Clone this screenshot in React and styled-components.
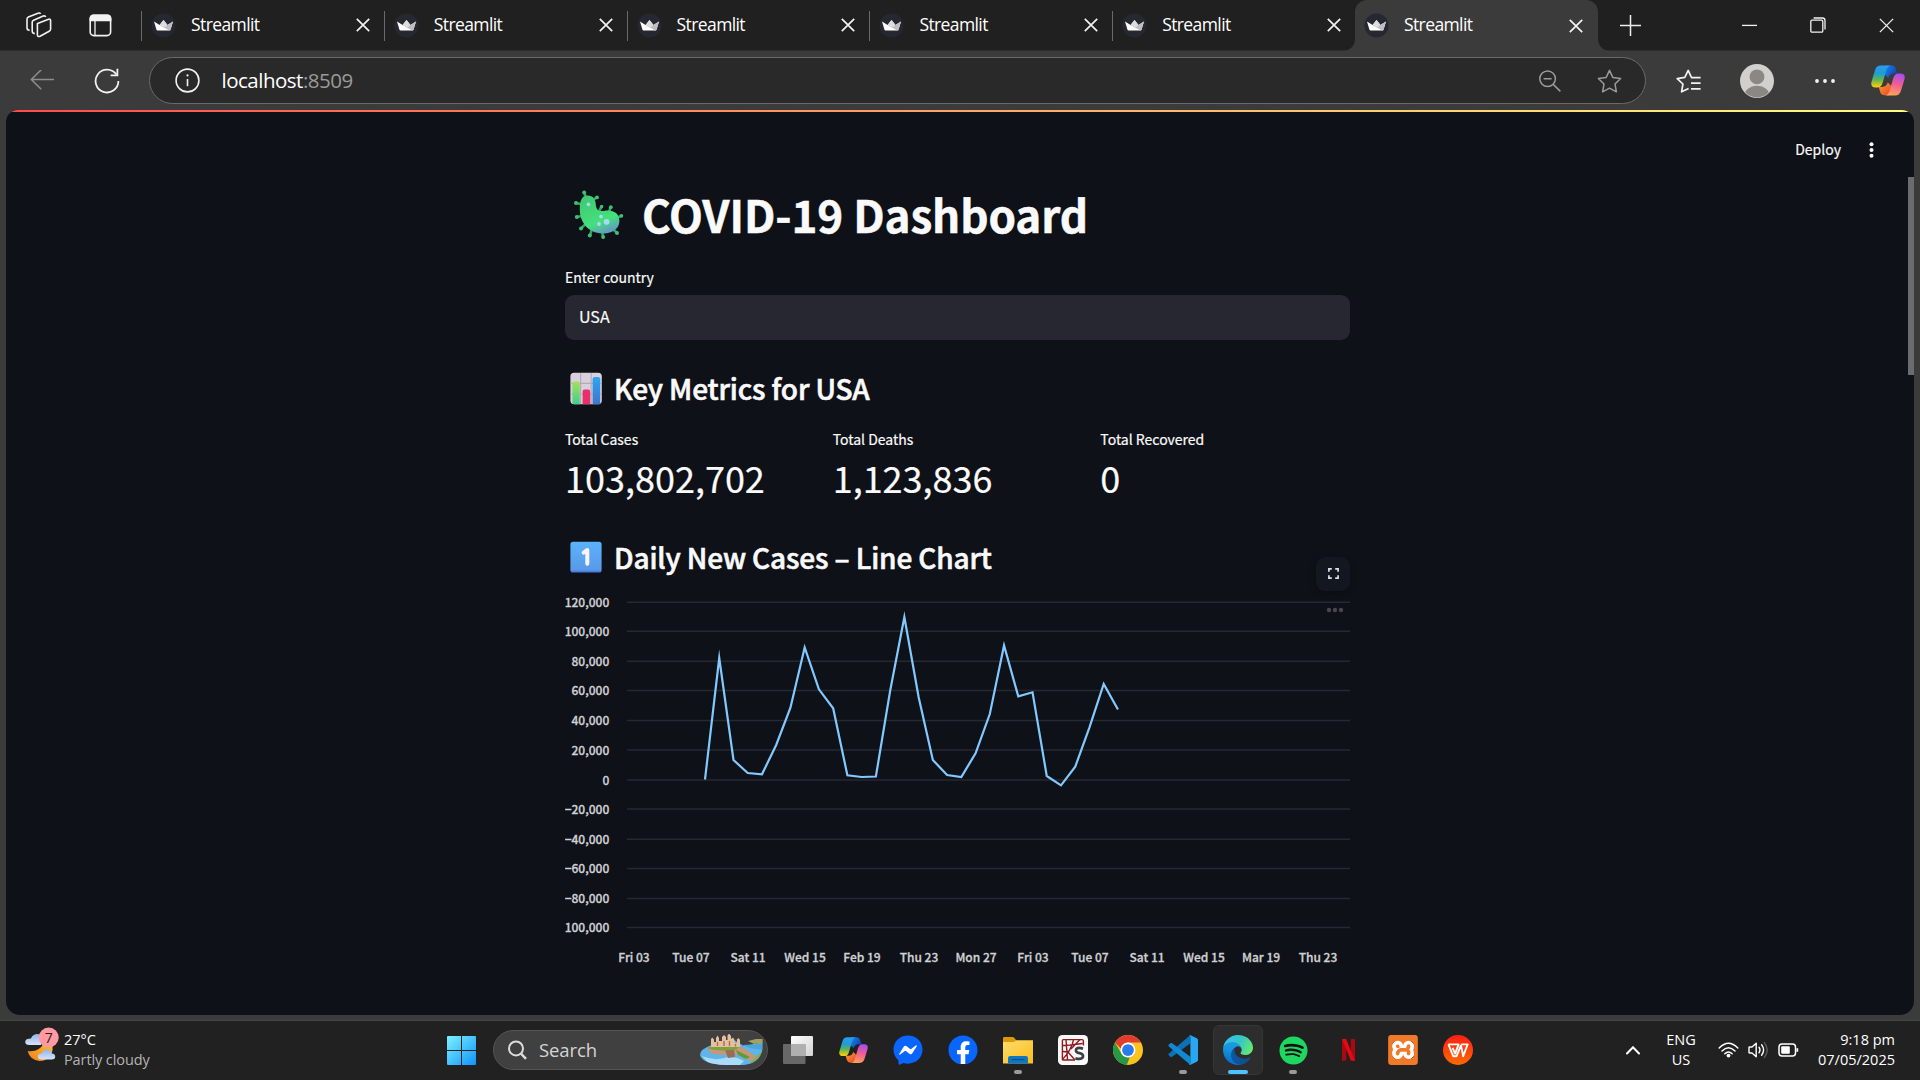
import React from "react";
import styled, { createGlobalStyle } from "styled-components";
import { FaFacebook, FaFacebookMessenger, FaSpotify } from "react-icons/fa";
import { SiXampp } from "react-icons/si";

const UI_FONT = '"Open Sans", "Noto Sans", sans-serif';
const APP_FONT = '"Noto Sans CJK SC", "Noto Sans CJK JP", sans-serif';

const GlobalStyle = createGlobalStyle`
  * { box-sizing: border-box; }
  html, body { margin: 0; padding: 0; background: #3b3b3b; overflow: hidden; }
  svg { display: block; flex: none; }
`;

const Screen = styled.div`
  width: 1920px;
  height: 1080px;
  display: flex;
  flex-direction: column;
  background: #3b3b3b;
  overflow: hidden;
  font-family: ${UI_FONT};
  color: #fff;
`;

/* ---------- tab strip ---------- */
const TabStrip = styled.div`
  height: 51px;
  flex: none;
  display: flex;
  background: #202020;
  border-bottom: 1px solid #2d2d2d;
`;
const StripTools = styled.div`
  width: 141px;
  display: flex;
  align-items: center;
  padding-left: 26px;
  gap: 37px;
`;
const Tab = styled.div`
  width: ${(p) => (p.$active ? 243.5 : 242.8)}px;
  height: ${(p) => (p.$active ? 51 : 50)}px;
  position: relative;
  display: flex;
  align-items: center;
  padding: 0 ${(p) => (p.$active ? 15 : 14)}px 0 ${(p) => (p.$active ? 9 : 10)}px;
  background: ${(p) => (p.$active ? "#3b3b3b" : "transparent")};
  border-radius: ${(p) => (p.$active ? "12px 12px 0 0" : "0")};
  &::before {
    content: "";
    display: ${(p) => (p.$active ? "none" : "block")};
    position: absolute;
    left: 0;
    top: 11px;
    width: 1px;
    height: 30px;
    background: #6a6a6a;
  }
`;
const TabTitle = styled.span`
  margin-left: 15px;
  flex: 1;
  font-size: 17.5px;
  letter-spacing: -0.6px;
  line-height: 24px;
  padding-bottom: 3px;
`;
const Flare = styled.div`
  position: absolute;
  bottom: 0;
  width: 12px;
  height: 12px;
  ${(p) => (p.$side === "left" ? "left: -12px;" : "right: -12px;")}
  background: radial-gradient(
    circle at ${(p) => (p.$side === "left" ? "0 0" : "100% 0")},
    transparent 11.5px,
    #3b3b3b 12.5px
  );
`;
const StripEnd = styled.div`
  flex: 1;
  display: flex;
  align-items: center;
  padding: 0 26px 0 22px;
`;
const WindowButtons = styled.div`
  margin-left: auto;
  display: flex;
  align-items: center;
  gap: 53px;
`;

/* ---------- address row ---------- */
const Toolbar = styled.div`
  height: 59px;
  flex: none;
  display: flex;
  align-items: center;
  background: #3b3b3b;
`;
const NavButtons = styled.div`
  width: 149px;
  display: flex;
  align-items: center;
  padding-left: 30px;
  gap: 40px;
`;
const AddressBar = styled.div`
  width: 1497px;
  height: 47px;
  display: flex;
  align-items: center;
  padding: 0 23px 0 25px;
  border: 1.5px solid #6a6a6a;
  border-radius: 24px;
  background: #292929;
`;
const Url = styled.span`
  margin-left: 21.5px;
  flex: 1;
  font-size: 20.5px;
  letter-spacing: -0.5px;
  line-height: 28px;
  padding-bottom: 2px;
  color: #fff;
  span { color: #9a9a9a; }
`;
const AddressActions = styled.div`
  display: flex;
  align-items: center;
  gap: 36px;
`;
const ToolbarActions = styled.div`
  flex: 1;
  display: flex;
  align-items: center;
  padding-left: 30px;
`;
const Slot = styled.div`
  margin-left: ${(p) => p.$gap}px;
`;

/* ---------- page ---------- */
const Page = styled.main`
  position: relative;
  width: 1908px;
  height: 905px;
  flex: none;
  margin-left: 6px;
  background: #0e1117;
  border-radius: 12px 12px 14px 14px;
  overflow: hidden;
  display: flex;
  flex-direction: column;
  font-family: ${APP_FONT};
  color: #fafafa;
`;
const Decoration = styled.div`
  height: 2px;
  flex: none;
  background: linear-gradient(90deg, #ff4b4b, #fffd80);
`;
const AppHeader = styled.header`
  height: 72px;
  flex: none;
  display: flex;
  align-items: center;
  justify-content: flex-end;
  padding: 3px 40px 0 0;
  gap: 28px;
`;
const Deploy = styled.span`
  font-size: 14px;
  line-height: 20px;
  padding-bottom: 1px;
  -webkit-text-stroke: 0.2px currentColor;
`;
const ScrollThumb = styled.div`
  position: absolute;
  right: 0;
  top: 67px;
  width: 6px;
  height: 198px;
  background: #6b6c70;
`;
const Column = styled.div`
  width: 785px;
  margin-left: 559px;
  display: flex;
  flex-direction: column;
`;
const Title = styled.h1`
  margin: 0;
  height: 60px;
  display: flex;
  align-items: center;
  padding-left: 8px;
  gap: 17px;
  font-size: 44px;
  line-height: 60px;
  font-weight: 700;
  letter-spacing: -0.08px;
  white-space: nowrap;
  -webkit-text-stroke: 0.5px currentColor;
`;
const FieldLabel = styled.label`
  margin-top: 23px;
  height: 20px;
  font-size: 14px;
  line-height: 20px;
  -webkit-text-stroke: 0.2px currentColor;
`;
const Input = styled.div`
  margin-top: 8px;
  height: 45px;
  display: flex;
  align-items: center;
  padding: 0 14px 4px;
  border-radius: 9px;
  background: #262730;
  font-size: 16px;
  line-height: 24px;
  -webkit-text-stroke: 0.2px currentColor;
`;
const Heading = styled.h2`
  margin: ${(p) => p.$top}px 0 0;
  height: 40px;
  display: flex;
  align-items: center;
  padding-left: 5px;
  gap: 11px;
  font-size: 28px;
  line-height: 40px;
  font-weight: 500;
  letter-spacing: -0.14px;
  white-space: nowrap;
  -webkit-text-stroke: 0.6px currentColor;
`;
const HeadingText = styled.span`
  padding-bottom: ${(p) => p.$lift || 0}px;
`;
const Metrics = styled.div`
  margin-top: 20px;
  display: grid;
  grid-template-columns: repeat(3, 1fr);
  column-gap: 18px;
`;
const MetricLabel = styled.div`
  font-size: 14px;
  line-height: 20px;
  -webkit-text-stroke: 0.2px currentColor;
`;
const MetricValue = styled.div`
  margin-top: 4px;
  font-size: 36px;
  line-height: 48px;
  -webkit-text-stroke: 0.2px currentColor;
`;
const ChartBox = styled.div`
  position: relative;
  margin-top: 15px;
  height: 380px;
`;
const FullscreenButton = styled.button`
  position: absolute;
  right: 0;
  top: -35px;
  width: 34px;
  height: 34px;
  padding: 0;
  display: grid;
  place-items: center;
  border: 0;
  border-radius: 9px;
  background: #131720;
  box-shadow: 0 2px 6px rgba(0, 0, 0, 0.25);
`;

/* ---------- taskbar ---------- */
const Taskbar = styled.footer`
  margin-top: auto;
  height: 59px;
  flex: none;
  display: flex;
  align-items: flex-start;
  background: #212121;
  box-shadow: 0 -1px 0 #464646;
`;
const Weather = styled.div`
  width: 447px;
  height: 59px;
  display: flex;
  padding: 5px 0 0 25px;
  gap: 5px;
`;
const WeatherText = styled.div`
  padding-top: 4px;
  font-size: 14.5px;
  line-height: 20px;
  div + div { color: #b4b4b4; letter-spacing: -0.1px; }
`;
const StartSlot = styled.div`
  width: 46px;
  padding-top: 15px;
`;
const Search = styled.div`
  width: 275px;
  height: 40px;
  margin-top: 9px;
  display: flex;
  align-items: center;
  padding: 0 3px 0 14px;
  border: 1px solid #545454;
  border-radius: 20px;
  background: #404040;
`;
const SearchText = styled.span`
  margin-left: 12px;
  flex: 1;
  font-size: 18.5px;
  letter-spacing: -0.1px;
  line-height: 26px;
  color: #d4d4d4;
`;
const Apps = styled.div`
  display: flex;
  margin-top: 4px;
  margin-left: 5px;
`;
const AppSlot = styled.div`
  width: 50px;
  height: 50px;
  margin-right: 5.03px;
  position: relative;
  display: grid;
  place-items: center;
  border-radius: 6px;
  background: ${(p) => (p.$active ? "#2d2d2d" : "transparent")};
  border: 1px solid ${(p) => (p.$active ? "#363636" : "transparent")};
  &::after {
    content: "";
    display: ${(p) => (p.$active || p.$running ? "block" : "none")};
    position: absolute;
    bottom: 0;
    left: 50%;
    transform: translateX(-50%);
    width: ${(p) => (p.$active ? 20 : 8)}px;
    height: 4px;
    border-radius: 2px;
    background: ${(p) => (p.$active ? "#4cc2ff" : "#9a9a9a")};
  }
`;
const Disc = styled.div`
  width: 30px;
  height: 30px;
  border-radius: ${(p) => p.$radius || "50%"};
  display: grid;
  place-items: center;
  color: ${(p) => p.$color};
  background: radial-gradient(${(p) => p.$inner} 0 ${(p) => p.$reach || 12}px, transparent ${(p) => p.$reach || 12}px);
`;
const Tray = styled.div`
  margin-left: auto;
  height: 59px;
  display: flex;
  align-items: flex-start;
  padding-right: 25px;
`;
const TrayIcon = styled.div`
  padding-top: ${(p) => p.$top}px;
  margin-right: ${(p) => p.$gap}px;
`;
const TrayText = styled.div`
  width: ${(p) => p.$width}px;
  margin-right: ${(p) => p.$gap || 0}px;
  padding-top: 9px;
  font-size: 14.5px;
  line-height: 20px;
  text-align: ${(p) => p.$align};
  white-space: nowrap;
`;

/* ---------- icons ---------- */
const Crown = () => (
  <svg width="25" height="25" viewBox="0 0 25 25">
    <circle cx="12.5" cy="12.5" r="12" fill="#262730" />
    <path d="M3 8.5 8.6 12 12.5 7 16.4 12 22 8.5 19.6 16.5Q19.3 17.4 18.4 17.4H6.6Q5.7 17.4 5.4 16.5Z" fill="#fff" />
    <path d="M12.5 7 16.4 12 22 8.5 19.6 16.5Q19.3 17.4 18.4 17.4L9 12.5Z" fill="#bdbdc2" />
    <path d="M8.6 12 12.5 7 16.4 12 13.5 14.5Z" fill="#dcdcdf" />
  </svg>
);
const Cross = ({ size, weight = 1.7 }) => (
  <svg width={size} height={size} viewBox="0 0 14 14" fill="none" stroke="#f2f2f2" strokeWidth={weight}>
    <path d="M.8.8 13.2 13.2M13.2.8.8 13.2" />
  </svg>
);
const Workspaces = () => (
  <svg width="26" height="26" viewBox="0 0 26 26" fill="none" stroke="#f2f2f2" strokeWidth="1.6" strokeLinejoin="round">
    <path d="M11.5 11.6 22.6 7.2Q24.6 6.6 24.6 8.8V17Q24.6 18.6 23.2 19.2L14 24.2Q11.4 25.2 11.4 22.8V11.6Z" />
    <path d="M8.8 21.6Q6.2 21.4 6.2 19V10.2Q6.2 8.8 7.6 8.2L17.2 4Q19.2 3.4 19.6 5" />
    <path d="M3.6 18.4Q1 18.2 1 15.8V7.2Q1 5.6 2.4 5L12 1.2Q14 .6 14.4 2" />
  </svg>
);
const TabActions = () => (
  <svg width="23" height="23" viewBox="0 0 23 23" fill="none" stroke="#f2f2f2" strokeWidth="1.6">
    <rect x="1.2" y="1.2" width="20.4" height="20.4" rx="3.6" />
    <path d="M1.4 6.4V4.6Q1.4 1.4 4.6 1.4H18.4Q21.6 1.4 21.6 4.6V6.4Z" fill="#f2f2f2" />
    <path d="M6 6.5V21.6" strokeWidth="1.3" />
  </svg>
);
const Plus = () => (
  <svg width="21" height="21" viewBox="0 0 21 21" stroke="#ededed" strokeWidth="1.5">
    <path d="M10.5 0V21M0 10.5H21" />
  </svg>
);
const Minimize = () => (
  <svg width="15" height="16" viewBox="0 0 15 16" stroke="#f2f2f2" strokeWidth="1.3">
    <path d="M0 8.4H15" />
  </svg>
);
const Restore = () => (
  <svg width="16" height="16" viewBox="0 0 16 16" fill="none" stroke="#f2f2f2" strokeWidth="1.3">
    <rect x=".8" y="3.2" width="12" height="12" rx="1.2" />
    <path d="M3.6 1H12.4Q15 1 15 3.6V12.6" />
  </svg>
);
const BackArrow = () => (
  <svg width="24" height="21" viewBox="0 0 24 21" fill="none" stroke="#8c8c8c" strokeWidth="1.6">
    <path d="M24 9.5H1.4M11.2-.2 1.4 9.500 11.2 19.2" />
  </svg>
);
const Refresh = () => (
  <svg width="26" height="26" viewBox="0 0 26 26" fill="none" stroke="#f2f2f2" strokeWidth="1.8">
    <path d="M22.4 6.6A11.4 11.4 0 1 0 24.4 13" />
    <path d="M23.4.8V7.4H16.6" />
  </svg>
);
const Info = () => (
  <svg width="25" height="25" viewBox="0 0 25 25" fill="none" stroke="#f2f2f2" strokeWidth="1.6">
    <circle cx="12.5" cy="12.5" r="11.4" />
    <path d="M12.5 11V18.2" />
    <circle cx="12.5" cy="7.4" r="1.1" fill="#f2f2f2" stroke="none" />
  </svg>
);
const ZoomOut = () => (
  <svg width="22" height="22" viewBox="0 0 22 22" fill="none" stroke="#9a9a9a" strokeWidth="1.5">
    <circle cx="8.6" cy="8.8" r="7.8" />
    <path d="M14.2 14.4 21.4 21.4M4.6 8.8H12.6" />
  </svg>
);
const STAR = "M12.5 1.4 15.8 8.4 23.6 9.5 18 15 19.4 22.8 12.5 19.2 5.6 22.8 7 15 1.4 9.5 9.2 8.4Z";
const Star = () => (
  <svg width="25" height="24" viewBox="0 0 25 24" fill="none" stroke="#9a9a9a" strokeWidth="1.5" strokeLinejoin="round">
    <path d={STAR} />
  </svg>
);
const Favorites = () => (
  <svg width="25" height="24" viewBox="0 0 25 24" fill="none" stroke="#f2f2f2" strokeWidth="1.7" strokeLinejoin="round">
    <path d="M12.6 19.4 5.6 22.8 6.9 15 1.2 9.6 8.8 8.4 12.2 1.4 15.4 8.4" />
    <path d="M15 8.6H24.6M15 14.2H24.6M15 19.8H24.6" />
  </svg>
);
const Avatar = () => (
  <svg width="34" height="34" viewBox="0 0 34 34">
    <defs><clipPath id="avatarClip"><circle cx="17" cy="17" r="16.4" /></clipPath></defs>
    <circle cx="17" cy="17" r="17" fill="#d2d0cd" />
    <g clipPath="url(#avatarClip)" fill="#8a8785">
      <circle cx="17" cy="12.8" r="7.4" />
      <ellipse cx="17" cy="32" rx="12.6" ry="10.2" />
    </g>
  </svg>
);
const More = () => (
  <svg width="20" height="6" viewBox="0 0 20 6" fill="#f2f2f2">
    <circle cx="2" cy="3" r="1.9" /><circle cx="10" cy="3" r="1.9" /><circle cx="18" cy="3" r="1.9" />
  </svg>
);
const Copilot = ({ width, id }) => (
  <svg width={width} height={width * 0.9} viewBox="0 0 34 30.6">
    <defs>
      <linearGradient id={id + "a"} x1="0.3" y1="0" x2="0.3" y2="1">
        <stop offset="0" stopColor="#2a9df4" /><stop offset=".35" stopColor="#1f9bd6" />
        <stop offset=".65" stopColor="#5fb653" /><stop offset=".95" stopColor="#f3cc12" />
      </linearGradient>
      <linearGradient id={id + "b"} x1="0.6" y1="0" x2="0.4" y2="1">
        <stop offset="0" stopColor="#a64df0" /><stop offset=".45" stopColor="#ef5a9a" />
        <stop offset="1" stopColor="#ffa057" />
      </linearGradient>
      <linearGradient id={id + "c"} x1="0" y1="0" x2="1" y2="0.6">
        <stop offset="0" stopColor="#1390f0" /><stop offset="1" stopColor="#143fb5" />
      </linearGradient>
      <linearGradient id={id + "d"} x1="0" y1="0" x2="1" y2="1">
        <stop offset="0" stopColor="#f9a32a" /><stop offset="1" stopColor="#e8402f" />
      </linearGradient>
    </defs>
    <path d="M15 .4H20.6Q23.8.4 24.8 3.6L26.2 8.6H22.6Q18.6 8.8 17.2 13L13 9Z" fill={`url(#${id}c)`} />
    <path d="M19 30.2H13.4Q10.2 30.2 9.2 27L7.8 22H11.4Q15.4 21.8 16.8 17.6L21 21.6Z" fill={`url(#${id}d)`} />
    <path d="M9.8.4H19.4Q16.6 1 15.6 4.2L11.8 17.2Q10.2 22.4 7 22.4H4.6Q-1 22.4.6 16.4L4.2 4.4Q5.6.4 9.8.4Z" fill={`url(#${id}a)`} />
    <path d="M24.2 30.4H14.6Q17.4 29.8 18.4 26.6L22.200 13.4Q23.800 8.4 27 8.4H29.4Q35 8.4 33.4 14.4L29.8 26.2Q28.4 30.4 24.2 30.4Z" fill={`url(#${id}b)`} />
  </svg>
);
const Kebab = () => (
  <svg width="5" height="16" viewBox="0 0 5 16" fill="#fafafa">
    <circle cx="2.5" cy="2.2" r="2" /><circle cx="2.5" cy="8" r="2" /><circle cx="2.5" cy="13.8" r="2" />
  </svg>
);
const Microbe = () => (
  <svg width="52" height="50" viewBox="0 0 52 50">
    <defs>
      <linearGradient id="microbe" x1="0.2" y1="0" x2="0.6" y2="1">
        <stop offset="0" stopColor="#3fc873" /><stop offset=".7" stopColor="#45e07c" /><stop offset="1" stopColor="#5f9fc0" />
      </linearGradient>
    </defs>
    <g stroke="#35a268" strokeWidth="2.6" strokeLinecap="round">
      <path d="M13 9 11.4 4M20 11 23.4 8.6M9 15.4 3.6 14M8.4 27 4.4 28M12 35.6 8.4 39M18.6 41 17 46.4M29.4 43.6 30 48.4M41 41 43.6 43.6M44 28.6 48 27M36 23 37.4 18.6M26.6 21 28.4 18" />
    </g>
    <g fill="#3fbf74">
      <circle cx="11.2" cy="3.4" r="2" /><circle cx="24" cy="8.4" r="1.9" /><circle cx="3" cy="14" r="2" />
      <circle cx="3.8" cy="28" r="2" /><circle cx="8" cy="39.4" r="2" /><circle cx="16.8" cy="46.6" r="2" />
      <circle cx="30.2" cy="48" r="1.9" /><circle cx="44" cy="44" r="2" /><circle cx="48.4" cy="26.8" r="1.9" /><circle cx="37.8" cy="18.2" r="1.9" />
      <circle cx="28.6" cy="17.6" r="1.8" />
    </g>
    <path d="M14 6.6C20 6.2 22.6 10.4 22.8 15.4C23.2 21.4 26.4 22.8 32 21.8C39.600 20.600 46.400 23.8 46.400 32C46.400 40 39 44.8 29.4 44.4C15 44 6.8 33.4 6.8 20C6.8 11.6 9 7 14 6.6Z" fill="url(#microbe)" />
    <g fill="#a5dcf5">
      <circle cx="33.6" cy="32.8" r="2.9" /><circle cx="28" cy="27.6" r="1.8" /><circle cx="26" cy="35" r="1.9" /><circle cx="15.4" cy="15.4" r="1.8" />
    </g>
  </svg>
);
const BarEmoji = () => (
  <svg width="33" height="33" viewBox="0 0 33 33">
    <defs>
      <linearGradient id="barG" x1="0" y1="0" x2="0" y2="1"><stop offset="0" stopColor="#a4e254" /><stop offset="1" stopColor="#3fcf90" /></linearGradient>
      <linearGradient id="barB" x1="0" y1="0" x2="0" y2="1"><stop offset="0" stopColor="#2ba6f4" /><stop offset="1" stopColor="#3f75c8" /></linearGradient>
    </defs>
    <rect x=".4" y=".8" width="31.4" height="31.4" rx="3.6" fill="#d9d0de" />
    <path d="M10.6 1V32M21.2 1V32M.6 11.4H31.6M.6 22H31.6" stroke="#b5aab9" strokeWidth="1.2" />
    <path d="M2.4 11.4Q2.4 9.4 4.4 9.4H7.8Q9.8 9.4 9.8 11.4V32.2H4Q2.4 32 2.4 31Z" fill="url(#barG)" />
    <path d="M12.6 19.8Q12.6 17.6 14.6 17.6H18Q20.2 17.6 20.2 19.8V32.2H12.6Z" fill="#e92f6b" />
    <path d="M22.6 7.2Q22.6 5 24.6 5H28Q30.2 5 30.2 7.2V32.2H22.6Z" fill="url(#barB)" />
  </svg>
);
const KeycapOne = () => (
  <svg width="33" height="33" viewBox="0 0 33 33">
    <defs>
      <linearGradient id="keycap" x1="0" y1="0" x2="0" y2="1"><stop offset="0" stopColor="#5bb2fb" /><stop offset=".9" stopColor="#5a9ae8" /><stop offset="1" stopColor="#3f74d6" /></linearGradient>
    </defs>
    <rect x=".4" y="1.800" width="31.2" height="30.8" rx="2.6" fill="url(#keycap)" />
    <path d="M13.6 12.600 17.3 10V23.800" fill="none" stroke="#fbf4ff" strokeWidth="4" strokeLinecap="round" strokeLinejoin="round" />
  </svg>
);
const Fullscreen = () => (
  <svg width="11" height="11" viewBox="0 0 11 11" fill="none" stroke="#dedfe2" strokeWidth="1.7">
    <path d="M.9 3.8V.9H3.8M7.2.9H10.1V3.8M10.1 7.2V10.1H7.2M3.8 10.1H.9V7.2" />
  </svg>
);
const WeatherIcon = () => (
  <svg width="34" height="37" viewBox="0 0 34 37">
    <defs>
      <linearGradient id="cloud" x1="0" y1="0" x2="0" y2="1"><stop offset="0" stopColor="#8fb4ea" /><stop offset="1" stopColor="#d7e4fa" /></linearGradient>
      <linearGradient id="moon" x1="0" y1="1" x2="1" y2="0"><stop offset="0" stopColor="#f07f1e" /><stop offset="1" stopColor="#fbc02d" /></linearGradient>
    </defs>
    <path d="M2.6 26.4Q14 28 18.6 19L26 18Q28.6 22 27 28Q23 36.6 14.6 36.400Q5 35.600 2.600 26.400Z" fill="url(#moon)" transform="translate(0 -1.5)" />
    <path d="M4.5 19H16V9.5Q12.5 6.8 8.7 9Q6.6 10.2 6 12.6Q.2 12.6.2 16Q.2 19 4.5 19Z" fill="url(#cloud)" />
    <path d="M16.6 33.6H26.6Q30.4 33.4 30.2 30.2Q30 27.6 26.8 27.4Q25.6 23.2 21.6 23.4Q17.6 23.4 17 27.4Q12.8 27.2 12.8 30.6Q12.8 33.6 16.6 33.6Z" fill="url(#cloud)" />
    <circle cx="23.7" cy="11.5" r="10" fill="#ff9aa3" />
    <text x="23.7" y="16.6" textAnchor="middle" fontFamily="Open Sans, sans-serif" fontSize="14" fill="#2b1b1d">7</text>
  </svg>
);
const WindowsLogo = () => (
  <svg width="29" height="29" viewBox="0 0 29 29">
    <defs>
      <linearGradient id="win" x1="0" y1="0" x2="1" y2="1"><stop offset="0" stopColor="#7df1ff" /><stop offset="1" stopColor="#0f93fb" /></linearGradient>
    </defs>
    <path d="M1 0H14V14H0V1Q0 0 1 0ZM15 0H28Q29 0 29 1V14H15ZM0 15H14V29H1Q0 29 0 28ZM15 15H29V28Q29 29 28 29H15Z" fill="url(#win)" />
  </svg>
);
const Magnifier = () => (
  <svg width="19" height="20" viewBox="0 0 19 20" fill="none" stroke="#dcdcdc" strokeWidth="2">
    <circle cx="8" cy="8.4" r="7" /><path d="M13 13.6 18 18.8" strokeWidth="2.4" />
  </svg>
);
const Castle = () => (
  <svg width="64" height="32" viewBox="0 0 64 32">
    <defs><clipPath id="pill"><path d="M12 11Q0 15 0 21Q2 30 26 31H44Q60 29 62.500 15V5H40Z" /></clipPath></defs>
    <g clipPath="url(#pill)">
      <rect width="64" height="32" fill="#5fb4e8" />
      <path d="M24 0H64V8L44 12Z" fill="#404040" />
      <path d="M42 11 62 10V16L50 14Z" fill="#4aa5dc" />
      <path d="M2 22Q14 27 24 24T44 27L40 31H10Z" fill="#a9dcf8" />
      <path d="M64 15 48 31H64Z" fill="#7db254" />
    </g>
    <path d="M8 14Q8 19 14 20L26 21 36 20 50 27 57 23 42 13Z" fill="#c79676" />
    <path d="M25 16 34 15 35 23 28 24Z" fill="#9b6b55" />
    <path d="M8 13.500Q20 10 40 12.500L36 15.500Q20 18 8 14.500Z" fill="#7ba23c" />
    <path d="M36 16 50 23 46 25 38 21Z" fill="#5f9a3c" />
    <path d="M48 7 56 5 62.500 5V9L54 10Z" fill="#a3a15c" />
    <path d="M11 13V5L12.300 3.500 14 5.500V8H16V4L17.500 1.500 19 4V7H22V3L24 1 26 3V6H27.500V1.500L29 -.5 31 2V5L33 3.500 34.500 6V9H37V5.500L38.500 4 40 6V13Z" fill="#e8bf9d" />
    <path d="M17.500 8V12M24 7V12M29.500 7V12M35.500 10V12.500" stroke="#a86f55" strokeWidth="1.4" />
  </svg>
);
const TaskView = () => (
  <svg width="30" height="28" viewBox="0 0 30 28">
    <defs><linearGradient id="tv" x1="0" y1="0" x2="1" y2="1"><stop offset="0" stopColor="#fff" /><stop offset="1" stopColor="#d2d2d2" /></linearGradient></defs>
    <rect x="8" y="0" width="22" height="20" rx="1" fill="url(#tv)" />
    <rect x="0" y="8" width="22.5" height="20" rx="1" fill="#747474" fillOpacity=".85" />
    <rect x="8" y="8" width="14.5" height="12" fill="#b0b0b0" />
  </svg>
);
const Folder = () => (
  <svg width="30" height="27" viewBox="0 0 30 27">
    <defs><linearGradient id="fold" x1="0" y1="0" x2="1" y2="1"><stop offset="0" stopColor="#ffdd6b" /><stop offset="1" stopColor="#fbbc1c" /></linearGradient></defs>
    <path d="M0 1.2Q0 0 1.2 0H9.5Q10.6 0 11.4.9L13.4 3.4V8H0Z" fill="#dc9b06" />
    <path d="M0 5H11L13.4 3.2H30V26.4H0Z" fill="url(#fold)" />
    <path d="M5 26.4V21.2Q5 19 7.2 19H22.8Q25 19 25 21.2V26.4Z" fill="#0f77c2" />
    <path d="M8.6 22.6H21.4" stroke="#0b4f8a" strokeWidth="1.2" />
  </svg>
);
const Spyder = () => (
  <svg width="30" height="30" viewBox="0 0 30 30">
    <rect width="30" height="30" rx="4.5" fill="#fafafa" />
    <g fill="none" stroke="#93191f" strokeWidth="1.4">
      <path d="M17 25H5Q4.4 25 4.4 24.4V5.4Q4.4 4.6 5.2 4.6H24Q25.4 4.6 25.4 6V10.5" />
      <path d="M8 4.6 9.5 25M15.5 4.6Q14 14 4.6 24.4M9 16 17 25M4.6 10.5 12 10 24.8 8.5M22 4.6 13 14M4.6 16.5 10 17" />
    </g>
    <path d="M25 13.6Q19 11.8 18 14.8Q17.4 17.4 21.6 18.2Q25.6 19 25 21.8Q23.8 25 17.4 23.4" fill="none" stroke="#3c4043" strokeWidth="2.7" />
  </svg>
);
const Chrome = () => (
  <svg width="30" height="30" viewBox="0 0 48 48">
    <circle cx="24" cy="24" r="24" fill="#fcc31e" />
    <path d="M3.4 12A24 24 0 0 1 44.8 12H24Q13 13 13.2 22.5Z" fill="#e33b2e" />
    <path d="M3.2 12 13.6 30Q18 37 27 35.2L22 48A24 24 0 0 1 3.2 12Z" fill="#279847" />
    <circle cx="24" cy="24" r="12" fill="#fff" />
    <circle cx="24" cy="24" r="9.4" fill="#2b7bee" />
  </svg>
);
const VSCode = () => (
  <svg width="30" height="30" viewBox="0 0 30 30">
    <path d="M22.4 0 .9 18.6Q0 19.5.9 20.5L2.4 21.8Q3.2 22.4 4.2 21.8L22.4 8.2Z" fill="#0b72b8" />
    <path d="M22.4 30 .9 11.4Q0 10.5.9 9.5L2.4 8.2Q3.2 7.6 4.2 8.2L22.4 21.8Z" fill="#1288d2" />
    <path d="M22 0 28.8 3.2Q30 3.8 30 5V25Q30 26.2 28.8 26.8L22 30Q21.6 30 21.2 29.4Q22.4 29.4 22.4 28V2Q22.4.6 21.2.6Q21.6 0 22 0Z" fill="#27a8f0" />
  </svg>
);
const Edge = () => (
  <svg width="30" height="30" viewBox="0 0 256 256">
    <defs>
      <linearGradient id="ed1" x1="0" y1=".5" x2="1" y2=".5"><stop offset="0" stopColor="#0c59a4" /><stop offset="1" stopColor="#114a8b" /></linearGradient>
      <linearGradient id="ed2" x1=".6" y1="0" x2=".3" y2="1"><stop offset="0" stopColor="#1b9de2" /><stop offset=".4" stopColor="#1595df" /><stop offset="1" stopColor="#0669c0" /></linearGradient>
      <linearGradient id="ed3" x1="0" y1=".3" x2="1" y2=".7"><stop offset="0" stopColor="#35c1f1" /><stop offset=".5" stopColor="#36c6c4" /><stop offset="1" stopColor="#66eb6e" /></linearGradient>
    </defs>
    <path fill="url(#ed1)" d="M231 190.5c-3.4 1.8-6.9 3.4-10.5 4.7a101.9 101.9 0 0 1-35.9 6.5c-47.3 0-88.5-32.5-88.5-74.3a31.5 31.5 0 0 1 16.4-27.2c-42.8 1.8-53.8 46.4-53.8 72.5 0 73.9 68.1 81.4 82.8 81.4 7.9 0 19.8-2.3 27-4.6l1.3-.4a128.3 128.3 0 0 0 66.6-52.8 4 4 0 0 0-5.4-5.8z" />
    <path fill="url(#ed2)" d="M105.7 241.4A79.2 79.2 0 0 1 83 220.1a80.7 80.7 0 0 1 29.5-120c3.2-1.5 8.5-4.1 15.6-4a32.4 32.4 0 0 1 25.7 13 31.9 31.9 0 0 1 6.3 18.7c0-.2 24.5-79.6-80-79.6-43.9 0-80 41.7-80 78.2a130.2 130.2 0 0 0 12.1 56 128 128 0 0 0 156.4 67.1 75.6 75.6 0 0 1-62.8-8z" />
    <path fill="url(#ed3)" d="M152.3 148.9c-.8 1-3.3 2.5-3.3 5.7 0 2.6 1.7 5.1 4.7 7.2 14.4 10 41.5 8.7 41.6 8.7a59.6 59.6 0 0 0 30.3-8.4A61.4 61.4 0 0 0 256 109.2c.3-22.4-8-37.3-11.3-43.9C223.5 23.8 177.7 0 128 0A128 128 0 0 0 0 126.2c.5-36.5 36.8-66 80-66 3.5 0 23.5.3 42 10 16.3 8.6 24.9 18.9 30.9 29.2 6.2 10.7 7.3 24.2 7.3 29.5 0 5.4-2.8 13.4-7.9 20z" />
  </svg>
);
const Netflix = () => (
  <svg width="13" height="22" viewBox="0 0 13 22">
    <path d="M0 0H4.2V21.4L0 22ZM8.8 0H13V22L8.8 21.4Z" fill="#a90a12" />
    <path d="M0 0H4.2L13 22 8.8 21.4Z" fill="#e50914" />
  </svg>
);
const Wps = () => (
  <svg width="30" height="30" viewBox="0 0 30 30">
    <defs><linearGradient id="wps" x1="0" y1="0" x2="0" y2="1"><stop offset="0" stopColor="#ff1f12" /><stop offset="1" stopColor="#ff6a00" /></linearGradient></defs>
    <circle cx="15" cy="15" r="15" fill="url(#wps)" />
    <path d="M5.4 9.4H15.600L12.200 18.600 9.600 12.800M5.400 9.400 10.200 21.200H13.600L18 10.400 20.200 21.200 24.600 9.400H18.400" fill="none" stroke="#fff" strokeWidth="1.9" strokeLinejoin="round" />
  </svg>
);
const Chevron = () => (
  <svg width="14" height="9" viewBox="0 0 14 9" fill="none" stroke="#fff" strokeWidth="2" strokeLinecap="round">
    <path d="M1 7.500 7 1.300 13 7.500" />
  </svg>
);
const Wifi = () => (
  <svg width="21" height="16" viewBox="0 0 21 16" fill="none" stroke="#fff" strokeWidth="1.5" strokeLinecap="round">
    <path d="M1.2 6Q10.5-3.6 19.8 6M4 9Q10.5 2.4 17 9M6.8 11.8Q10.5 8 14.2 11.8" />
    <circle cx="10.5" cy="13.6" r="1.9" fill="#fff" stroke="none" />
  </svg>
);
const Speaker = () => (
  <svg width="21" height="18" viewBox="0 0 21 18" fill="none" stroke="#fff" strokeWidth="1.4" strokeLinejoin="round" strokeLinecap="round">
    <path d="M1 6.6Q1 6 1.6 6H4L8.2 2.3V15.7L4 12H1.6Q1 12 1 11.4Z" />
    <path d="M11 6.2Q13 9 11 11.8M13.6 3.8Q17.6 9 13.6 14.2" />
    <path d="M16.4 1.6Q22 9 16.4 16.4" stroke="#5c5c5c" />
  </svg>
);
const Battery = () => (
  <svg width="21" height="14" viewBox="0 0 21 14" fill="none" stroke="#fff" strokeWidth="1.5">
    <rect x="1" y="1" width="16.5" height="12" rx="3" />
    <rect x="3.2" y="3.2" width="8.6" height="7.6" rx="1" fill="#fff" stroke="none" />
    <path d="M19.3 5.2V8.8" strokeWidth="1.8" />
  </svg>
);

/* ---------- chart ---------- */
const GRID = [
  ["120,000", 602.3], ["100,000", 631.3], ["80,000", 661.3], ["60,000", 690.6], ["40,000", 720.6], ["20,000", 750],
  ["0", 780], ["−20,000", 809], ["−40,000", 839.3], ["−60,000", 868.5], ["−80,000", 898.6], ["−100,000", 927.6],
];
const DATES = ["Fri 03", "Tue 07", "Sat 11", "Wed 15", "Feb 19", "Thu 23", "Mon 27", "Fri 03", "Tue 07", "Sat 11", "Wed 15", "Mar 19", "Thu 23"];
const SERIES = [
  779.5, 658, 760, 773, 774.3, 745, 707.7, 647.5, 689.3, 708.3, 775.3, 777, 776.5, 691, 617, 697, 760, 775,
  777, 753.3, 714, 645.5, 696.3, 692.3, 776, 785.3, 766.7, 727.3, 684, 709.5,
];
const ChartText = styled.text`
  font-family: ${APP_FONT};
  font-size: 12px;
  font-weight: 500;
  fill: #cfd0d4;
  stroke: #cfd0d4;
  stroke-width: 0.3px;
`;
const LineChart = () => (
  <svg width="785" height="380" viewBox="565 592 785 380">
    {GRID.map(([label, y]) => (
      <g key={label}>
        <path d={`M627 ${y}H1350`} stroke="#262932" strokeWidth="1.5" />
        <ChartText x="609.3" y={y + 4.6} textAnchor="end">{label}</ChartText>
      </g>
    ))}
    {DATES.map((d, i) => (
      <ChartText key={i} x={634 + i * 57} y="962" textAnchor="middle">{d}</ChartText>
    ))}
    <path
      d={"M" + SERIES.map((y, i) => `${(705 + i * 14.24).toFixed(2)} ${y}`).join("L")}
      fill="none" stroke="#83c9ff" strokeWidth="2.2" strokeMiterlimit="10"
    />
    <g fill="#46484d">
      <circle cx="1329" cy="610" r="2.2" /><circle cx="1335" cy="610" r="2.2" /><circle cx="1341" cy="610" r="2.2" />
    </g>
  </svg>
);

const METRICS = [
  ["Total Cases", "103,802,702"],
  ["Total Deaths", "1,123,836"],
  ["Total Recovered", "0"],
];

export default function App() {
  return (
    <Screen>
      <GlobalStyle />
      <TabStrip>
        <StripTools><Workspaces /><TabActions /></StripTools>
        {[0, 1, 2, 3, 4, 5].map((i) => (
          <Tab key={i} $active={i === 5}>
            {i === 5 && <Flare $side="left" />}
            <Crown />
            <TabTitle>Streamlit</TabTitle>
            <Cross size={14} />
            {i === 5 && <Flare $side="right" />}
          </Tab>
        ))}
        <StripEnd>
          <Plus />
          <WindowButtons><Minimize /><Restore /><Cross size={15} weight={1.2} /></WindowButtons>
        </StripEnd>
      </TabStrip>

      <Toolbar>
        <NavButtons><BackArrow /><Refresh /></NavButtons>
        <AddressBar>
          <Info />
          <Url>localhost<span>:8509</span></Url>
          <AddressActions><ZoomOut /><Star /></AddressActions>
        </AddressBar>
        <ToolbarActions>
          <Favorites />
          <Slot $gap={39}><Avatar /></Slot>
          <Slot $gap={41}><More /></Slot>
          <Slot $gap={36}><Copilot width={34} id="cpTop" /></Slot>
        </ToolbarActions>
      </Toolbar>

      <Page>
        <Decoration />
        <AppHeader><Deploy>Deploy</Deploy><Kebab /></AppHeader>
        <ScrollThumb />
        <Column>
          <Title><Microbe />COVID-19 Dashboard</Title>
          <FieldLabel>Enter country</FieldLabel>
          <Input>USA</Input>
          <Heading $top={28.5}><BarEmoji /><HeadingText $lift={2}>Key Metrics for USA</HeadingText></Heading>
          <Metrics>
            {METRICS.map(([label, value]) => (
              <div key={label}>
                <MetricLabel>{label}</MetricLabel>
                <MetricValue>{value}</MetricValue>
              </div>
            ))}
          </Metrics>
          <Heading $top={36}><KeycapOne /><HeadingText>Daily New Cases – Line Chart</HeadingText></Heading>
          <ChartBox>
            <LineChart />
            <FullscreenButton><Fullscreen /></FullscreenButton>
          </ChartBox>
        </Column>
      </Page>

      <Taskbar>
        <Weather>
          <WeatherIcon />
          <WeatherText><div>27°C</div><div>Partly cloudy</div></WeatherText>
        </Weather>
        <StartSlot><WindowsLogo /></StartSlot>
        <Search><Magnifier /><SearchText>Search</SearchText><Castle /></Search>
        <Apps>
          <AppSlot><TaskView /></AppSlot>
          <AppSlot><Copilot width={29} id="cpBar" /></AppSlot>
          <AppSlot><Disc $color="#0866ff" $inner="#fff"><FaFacebookMessenger size={30} /></Disc></AppSlot>
          <AppSlot><Disc $color="#0866ff" $inner="#fff" $reach={14}><FaFacebook size={30} /></Disc></AppSlot>
          <AppSlot $running><Folder /></AppSlot>
          <AppSlot><Spyder /></AppSlot>
          <AppSlot><Chrome /></AppSlot>
          <AppSlot $running><VSCode /></AppSlot>
          <AppSlot $active><Edge /></AppSlot>
          <AppSlot $running><Disc $color="#1ed760" $inner="#121212"><FaSpotify size={29} /></Disc></AppSlot>
          <AppSlot><Netflix /></AppSlot>
          <AppSlot><Disc $color="#f0792a" $inner="#fff" $radius="2px"><SiXampp size={30} /></Disc></AppSlot>
          <AppSlot><Wps /></AppSlot>
        </Apps>
        <Tray>
          <TrayIcon $top={25} $gap={22}><Chevron /></TrayIcon>
          <TrayText $width={38} $gap={18} $align="center">ENG<br />US</TrayText>
          <TrayIcon $top={21} $gap={9}><Wifi /></TrayIcon>
          <TrayIcon $top={20} $gap={9}><Speaker /></TrayIcon>
          <TrayIcon $top={22} $gap={17}><Battery /></TrayIcon>
          <TrayText $width={79} $align="right">9:18 pm<br />07/05/2025</TrayText>
        </Tray>
      </Taskbar>
    </Screen>
  );
}
